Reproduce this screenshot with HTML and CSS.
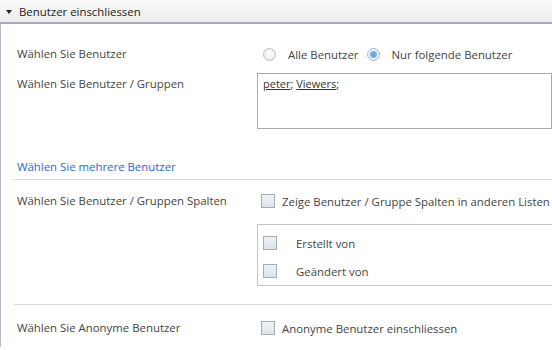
FILE: index.html
```html
<!DOCTYPE html>
<html lang="de">
<head>
  <meta charset="UTF-8">
  <title>Benutzer einschliessen</title>
  <link rel="stylesheet" href="styles.css">
</head>
<body>
  <div class="header">
    <span class="arrow"></span>
    <span class="headline">Benutzer einschliessen</span>
  </div>

  <div class="panel">
    <div class="row first">
      <div class="label">Wählen Sie Benutzer</div>
      <div class="field radios">
        <label class="option"><span class="radio"></span>Alle Benutzer</label>
        <label class="option"><span class="radio checked"></span>Nur folgende Benutzer</label>
      </div>
    </div>

    <div class="row users">
      <div class="label">Wählen Sie Benutzer / Gruppen</div>
      <div class="field">
        <div class="textbox"><u>peter</u>; <u>Viewers</u>;</div>
      </div>
    </div>

    <a class="more" href="#">Wählen Sie mehrere Benutzer</a>

    <div class="separator"></div>

    <div class="row columns">
      <div class="label">Wählen Sie Benutzer / Gruppen Spalten</div>
      <div class="field">
        <label class="option"><span class="check"></span>Zeige Benutzer / Gruppe Spalten in anderen Listen</label>
        <div class="subbox">
          <label class="option sub"><span class="check"></span>Erstellt von</label>
          <label class="option sub"><span class="check"></span>Geändert von</label>
        </div>
      </div>
    </div>

    <div class="separator lower"></div>

    <div class="row last">
      <div class="label">Wählen Sie Anonyme Benutzer</div>
      <div class="field">
        <label class="option"><span class="check"></span>Anonyme Benutzer einschliessen</label>
      </div>
    </div>
  </div>
</body>
</html>
```

FILE: styles.css
```css
body {
  margin: 0;
  font-family: "Open Sans", "Noto Sans", sans-serif;
  font-size: 11.4px;
  color: #444;
  background: #fff;
  overflow: hidden;
}

.header {
  height: 22px;
  display: flex;
  align-items: center;
  background: linear-gradient(#fbfbfb, #ebebeb);
  border-bottom: 2px solid #aaa6b6;
  color: #222;
}

.arrow {
  width: 0;
  height: 0;
  margin: 1px 7px 0 6px;
  border-left: 3px solid transparent;
  border-right: 3px solid transparent;
  border-top: 4px solid #222;
}

.panel {
  border-left: 1px solid #b4bccc;
  padding: 17px 0 6px 16px;
}

.row {
  display: grid;
  grid-template-columns: 240px 1fr;
}

.label {
  line-height: 26px;
}

.field {
  display: flex;
  flex-direction: column;
}

.radios {
  flex-direction: row;
  gap: 2px;
}

.option {
  display: flex;
  align-items: center;
  height: 26px;
  white-space: nowrap;
}

.radio {
  width: 11px;
  height: 11px;
  border: 1px solid #bdbdbd;
  border-radius: 50%;
  margin: 0 12px 0 6px;
  background: radial-gradient(circle at 50% 40%, #ffffff, #e3e6ea);
  box-sizing: content-box;
}

.radio.checked {
  border-color: #9db6cf;
  background: radial-gradient(circle, #5e9fdb 0, #7db3e3 3px, #e4edf6 4px, #f3f6f9 6px);
}

.users {
  margin-top: 6px;
}

.users .label {
  line-height: 22px;
}

.textbox {
  height: 50px;
  border: 1px solid #ababab;
  padding: 2px 5px;
  font-size: 11px;
  line-height: 16px;
  color: #333;
}

.more {
  display: block;
  margin-top: 28px;
  color: #2a67d8;
  text-decoration: none;
  line-height: 20px;
}

.separator {
  margin: 2px 0 8px -4px;
  border-top: 1px solid #dcdcdc;
}

.separator.lower {
  margin: 18px 0 10px -4px;
}

.check {
  width: 12px;
  height: 12px;
  border: 1px solid #a4acb8;
  background: linear-gradient(#eef2f6, #dde3ea);
  margin: 0 7px 0 4px;
}

.subbox {
  margin-top: 10px;
  height: 62px;
  border: 1px solid #c4c4c4;
  border-right: none;
  padding-top: 4px;
  box-sizing: border-box;
}

.option.sub {
  height: 28px;
}

.sub .check {
  margin: 0 19px 0 5px;
}

.last {
  margin-top: 6px;
}
```
